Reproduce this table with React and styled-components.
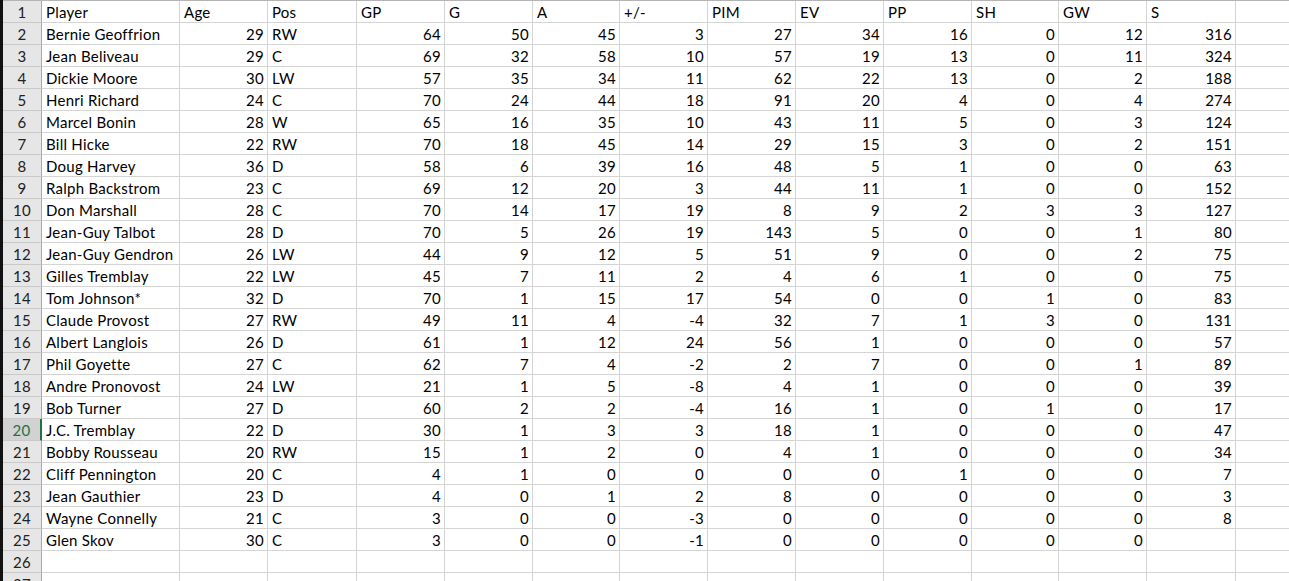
import React from "react";
import styled, { createGlobalStyle, css } from "styled-components";

const GlobalStyle = createGlobalStyle`
  html, body {
    margin: 0;
    padding: 0;
    background: #ffffff;
  }
  body {
    font-family: Lato, "Liberation Sans", sans-serif;
  }
`;

const COLS = [138, 88, 89, 88, 88, 87, 88, 88, 88, 88, 87, 88, 89, 88];

const Sheet = styled.div`
  width: 1289px;
  height: 581px;
  overflow: hidden;
  border-left: 3px solid #111;
  box-sizing: border-box;
  background: #fff;
`;

const Grid = styled.div`
  display: grid;
  grid-template-columns: 39px ${COLS.map((c) => `${c}px`).join(" ")};
  grid-auto-rows: 22px;
  border-top: 1px solid #b4b4b4;
`;

const RowHead = styled.div`
  display: flex;
  align-items: flex-end;
  justify-content: center;
  padding-bottom: 1px;
  box-sizing: border-box;
  background: ${(p) => (p.$active ? "#d2d2d2" : "#e6e6e6")};
  color: ${(p) => (p.$active ? "#217346" : "#222")};
  border-bottom: 1px solid #c9c9c9;
  border-right: ${(p) => (p.$active ? "2px solid #217346" : "1px solid #a9a9a9")};
  font-size: 15px;
  line-height: 18px;
  letter-spacing: 0.25px;
`;

const Cell = styled.div`
  display: flex;
  align-items: flex-end;
  box-sizing: border-box;
  padding: 0 3px 1px 4px;
  border-right: 1px solid #d4d4d4;
  border-bottom: 1px solid #d4d4d4;
  font-size: 15px;
  line-height: 18px;
  letter-spacing: 0.25px;
  color: #000;
  white-space: nowrap;
  ${(p) =>
    p.$num &&
    css`
      justify-content: flex-end;
    `}
`;

const header = ["Player", "Age", "Pos", "GP", "G", "A", "+/-", "PIM", "EV", "PP", "SH", "GW", "S"];

const players = [
  ["Bernie Geoffrion", 29, "RW", 64, 50, 45, 3, 27, 34, 16, 0, 12, 316],
  ["Jean Beliveau", 29, "C", 69, 32, 58, 10, 57, 19, 13, 0, 11, 324],
  ["Dickie Moore", 30, "LW", 57, 35, 34, 11, 62, 22, 13, 0, 2, 188],
  ["Henri Richard", 24, "C", 70, 24, 44, 18, 91, 20, 4, 0, 4, 274],
  ["Marcel Bonin", 28, "W", 65, 16, 35, 10, 43, 11, 5, 0, 3, 124],
  ["Bill Hicke", 22, "RW", 70, 18, 45, 14, 29, 15, 3, 0, 2, 151],
  ["Doug Harvey", 36, "D", 58, 6, 39, 16, 48, 5, 1, 0, 0, 63],
  ["Ralph Backstrom", 23, "C", 69, 12, 20, 3, 44, 11, 1, 0, 0, 152],
  ["Don Marshall", 28, "C", 70, 14, 17, 19, 8, 9, 2, 3, 3, 127],
  ["Jean-Guy Talbot", 28, "D", 70, 5, 26, 19, 143, 5, 0, 0, 1, 80],
  ["Jean-Guy Gendron", 26, "LW", 44, 9, 12, 5, 51, 9, 0, 0, 2, 75],
  ["Gilles Tremblay", 22, "LW", 45, 7, 11, 2, 4, 6, 1, 0, 0, 75],
  ["Tom Johnson*", 32, "D", 70, 1, 15, 17, 54, 0, 0, 1, 0, 83],
  ["Claude Provost", 27, "RW", 49, 11, 4, -4, 32, 7, 1, 3, 0, 131],
  ["Albert Langlois", 26, "D", 61, 1, 12, 24, 56, 1, 0, 0, 0, 57],
  ["Phil Goyette", 27, "C", 62, 7, 4, -2, 2, 7, 0, 0, 1, 89],
  ["Andre Pronovost", 24, "LW", 21, 1, 5, -8, 4, 1, 0, 0, 0, 39],
  ["Bob Turner", 27, "D", 60, 2, 2, -4, 16, 1, 0, 1, 0, 17],
  ["J.C. Tremblay", 22, "D", 30, 1, 3, 3, 18, 1, 0, 0, 0, 47],
  ["Bobby Rousseau", 20, "RW", 15, 1, 2, 0, 4, 1, 0, 0, 0, 34],
  ["Cliff Pennington", 20, "C", 4, 1, 0, 0, 0, 0, 1, 0, 0, 7],
  ["Jean Gauthier", 23, "D", 4, 0, 1, 2, 8, 0, 0, 0, 0, 3],
  ["Wayne Connelly", 21, "C", 3, 0, 0, -3, 0, 0, 0, 0, 0, 8],
  ["Glen Skov", 30, "C", 3, 0, 0, -1, 0, 0, 0, 0, 0, ""],
];

const ACTIVE_ROW = 20;

export default function App() {
  const rows = [header, ...players, [], []];
  return (
    <>
      <GlobalStyle />
      <Sheet>
        <Grid>
          {rows.map((row, r) => (
            <React.Fragment key={r}>
              <RowHead $active={r + 1 === ACTIVE_ROW}>{r + 1}</RowHead>
              {COLS.map((_, c) => {
                const v = row[c];
                const isNum = typeof v === "number";
                return (
                  <Cell key={c} $num={isNum}>
                    {v === undefined ? "" : v}
                  </Cell>
                );
              })}
            </React.Fragment>
          ))}
        </Grid>
      </Sheet>
    </>
  );
}
